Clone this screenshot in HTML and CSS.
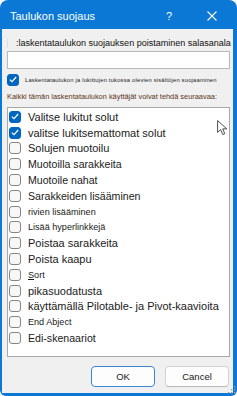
FILE: index.html
```html
<!DOCTYPE html>
<html lang="fi">
<head>
    <meta charset="UTF-8">
    <meta name="viewport" content="width=device-width, initial-scale=1.0">
    <title>Taulukon suojaus</title>
    <link rel="stylesheet" href="styles.css">
</head>
<body>
    <div class="dialog">
        <!-- Otsikkopalkki -->
        <div class="titlebar">
            <span class="title">Taulukon suojaus</span>
            <span class="title-btn help">?</span>
            <span class="title-btn close">
                <svg width="10" height="10" viewBox="0 0 10 10">
                    <path d="M0.5 0.5 L9.5 9.5 M9.5 0.5 L0.5 9.5" stroke="#fff" stroke-width="1.1" fill="none"/>
                </svg>
            </span>
        </div>

        <div class="content">
            <!-- Salasana -->
            <div class="password-row">
                <span class="ghost-box"></span>
                <span class="password-label">:laskentataulukon suojauksen poistaminen salasanala</span>
            </div>
            <input type="password" class="password-input">

            <label class="protect-row">
                <span class="box checked">
                    <svg width="8" height="7" viewBox="0 0 8 7"><path d="M0.8 3.6 L3 5.7 L7.2 1" stroke="#fff" stroke-width="1.2" fill="none"/></svg>
                </span>
                <span class="protect-label">Laskentataulukon ja lukittujen tukossa olevien sisältöjen suojaaminen</span>
            </label>

            <p class="allow-label">Kaikki tämän laskentataulukon käyttäjät voivat tehdä seuraavaa:</p>

            <!-- Sallitut toiminnot -->
            <ul class="options">
                <li class="option big"><span class="box checked"><svg width="8" height="7" viewBox="0 0 8 7"><path d="M0.8 3.6 L3 5.7 L7.2 1" stroke="#fff" stroke-width="1.2" fill="none"/></svg></span>Valitse lukitut solut</li>
                <li class="option big"><span class="box checked"><svg width="8" height="7" viewBox="0 0 8 7"><path d="M0.8 3.6 L3 5.7 L7.2 1" stroke="#fff" stroke-width="1.2" fill="none"/></svg></span>valitse lukitsemattomat solut</li>
                <li class="option big"><span class="box"></span>Solujen muotoilu</li>
                <li class="option mid"><span class="box"></span>Muotoilla sarakkeita</li>
                <li class="option mid"><span class="box"></span>Muotoile nahat</li>
                <li class="option mid"><span class="box"></span>Sarakkeiden lisääminen</li>
                <li class="option small"><span class="box"></span>rivien lisääminen</li>
                <li class="option small"><span class="box"></span>Lisää hyperlinkkejä</li>
                <li class="option big"><span class="box"></span>Poistaa sarakkeita</li>
                <li class="option big"><span class="box"></span>Poista kaapu</li>
                <li class="option small"><span class="box"></span><span><u>S</u>ort</span></li>
                <li class="option big"><span class="box"></span>pikasuodatusta</li>
                <li class="option big"><span class="box"></span>käyttämällä Pilotable- ja Pivot-kaavioita</li>
                <li class="option small"><span class="box"></span>End Abject</li>
                <li class="option mid"><span class="box"></span>Edi-skenaariot</li>
            </ul>

            <div class="buttons">
                <button class="btn ok">OK</button>
                <button class="btn">Cancel</button>
            </div>
        </div>

        <!-- Hiiren osoitin -->
        <svg class="cursor" width="11" height="16" viewBox="0 0 11 16">
            <path d="M0.6 0.6 L0.6 12.4 L3.6 9.6 L5.8 14.6 L7.8 13.7 L5.7 8.9 L9.8 8.9 Z" fill="#fff" stroke="#3a3a3a" stroke-width="0.9" stroke-linejoin="round"/>
        </svg>

        <!-- Koon muuttaminen -->
        <svg class="grip" width="9" height="9" viewBox="0 0 9 9">
            <rect x="7" y="1" width="1.4" height="1.4" fill="#9c9c9c"/>
            <rect x="4" y="4" width="1.4" height="1.4" fill="#9c9c9c"/>
            <rect x="7" y="4" width="1.4" height="1.4" fill="#9c9c9c"/>
            <rect x="1" y="7" width="1.4" height="1.4" fill="#9c9c9c"/>
            <rect x="4" y="7" width="1.4" height="1.4" fill="#9c9c9c"/>
            <rect x="7" y="7" width="1.4" height="1.4" fill="#9c9c9c"/>
        </svg>
    </div>
</body>
</html>
```

FILE: styles.css
```css
/* Style général */
body {
    margin: 0;
    background: #fff;
    font-family: "Liberation Sans", Arial, sans-serif;
    color: #1a1a1a;
    overflow: hidden;
}

.dialog {
    position: relative;
    width: 237px;
    height: 396px;
    box-sizing: border-box;
    background: #0a78d4;
    border-radius: 8px 8px 6px 6px;
    padding: 0 4px 3px 2px;
    display: flex;
    flex-direction: column;
}

.titlebar {
    height: 29px;
    display: flex;
    align-items: center;
    padding-top: 3px;
    box-sizing: border-box;
    color: #fff;
}

.title {
    flex: 1;
    padding-left: 8px;
    font-size: 11px;
}

.title-btn {
    display: flex;
    justify-content: center;
    align-items: center;
}

.help {
    width: 44px;
    font-size: 11px;
}

.close {
    width: 42px;
}

.content {
    flex: 1;
    background: #f0f0f0;
    padding: 8px 3px 0 5px;
    display: flex;
    flex-direction: column;
}

.password-row {
    height: 12px;
    display: flex;
    align-items: center;
    white-space: nowrap;
}

.ghost-box {
    width: 4px;
    height: 8px;
    border-left: 1px solid #dedede;
    background: #ebebeb;
    margin-right: 8px;
}

.password-label {
    font-size: 9.05px;
    letter-spacing: -0.02px;
    color: #111;
}

.password-input {
    margin: 2px 0 0;
    height: 18px;
    box-sizing: border-box;
    border: 1px solid #b9b9b9;
    background: #fff;
    padding: 0;
}

.protect-row {
    margin-top: 4px;
    height: 13px;
    display: flex;
    align-items: center;
    white-space: nowrap;
}

.protect-label {
    font-size: 5.8px;
    color: #222;
    letter-spacing: 0.2px;
    margin-left: 6px;
}

.allow-label {
    margin: 6px 0 0;
    height: 10px;
    line-height: 10px;
    font-size: 7.4px;
    color: #5c3420;
    white-space: nowrap;
}

.options {
    list-style: none;
    margin: 5px 0 0;
    padding: 1px 0 0 1px;
    height: 250px;
    box-sizing: border-box;
    background: #fff;
    border: 1px solid #a8a8a8;
}

.option {
    height: 15.8px;
    display: flex;
    align-items: center;
    gap: 7px;
    white-space: nowrap;
}

.option.big {
    font-size: 11px;
}

.option.mid {
    font-size: 10.6px;
}

.option.small {
    font-size: 9.1px;
}

.box {
    width: 12px;
    height: 12px;
    flex: none;
    box-sizing: border-box;
    border: 1px solid #858585;
    border-radius: 3px;
    background: #f7f7f7;
    display: flex;
    justify-content: center;
    align-items: center;
}

.box.checked {
    border-color: #0067c0;
    background: #0067c0;
}

.buttons {
    margin-top: 9px;
    display: flex;
    justify-content: flex-end;
    gap: 10px;
    padding-right: 1px;
}

.btn {
    width: 64px;
    height: 21px;
    box-sizing: border-box;
    font-family: "Liberation Sans", Arial, sans-serif;
    font-size: 9.5px;
    color: #1a1a1a;
    background: #fdfdfd;
    border: 1px solid #d2d2d2;
    border-bottom-color: #b8b8b8;
    border-radius: 4px;
    padding: 0;
}

.btn.ok {
    border: 1.5px solid #3b86d0;
}

.cursor {
    position: absolute;
    left: 217px;
    top: 120px;
}

.grip {
    position: absolute;
    right: 1px;
    bottom: 2px;
}
```
